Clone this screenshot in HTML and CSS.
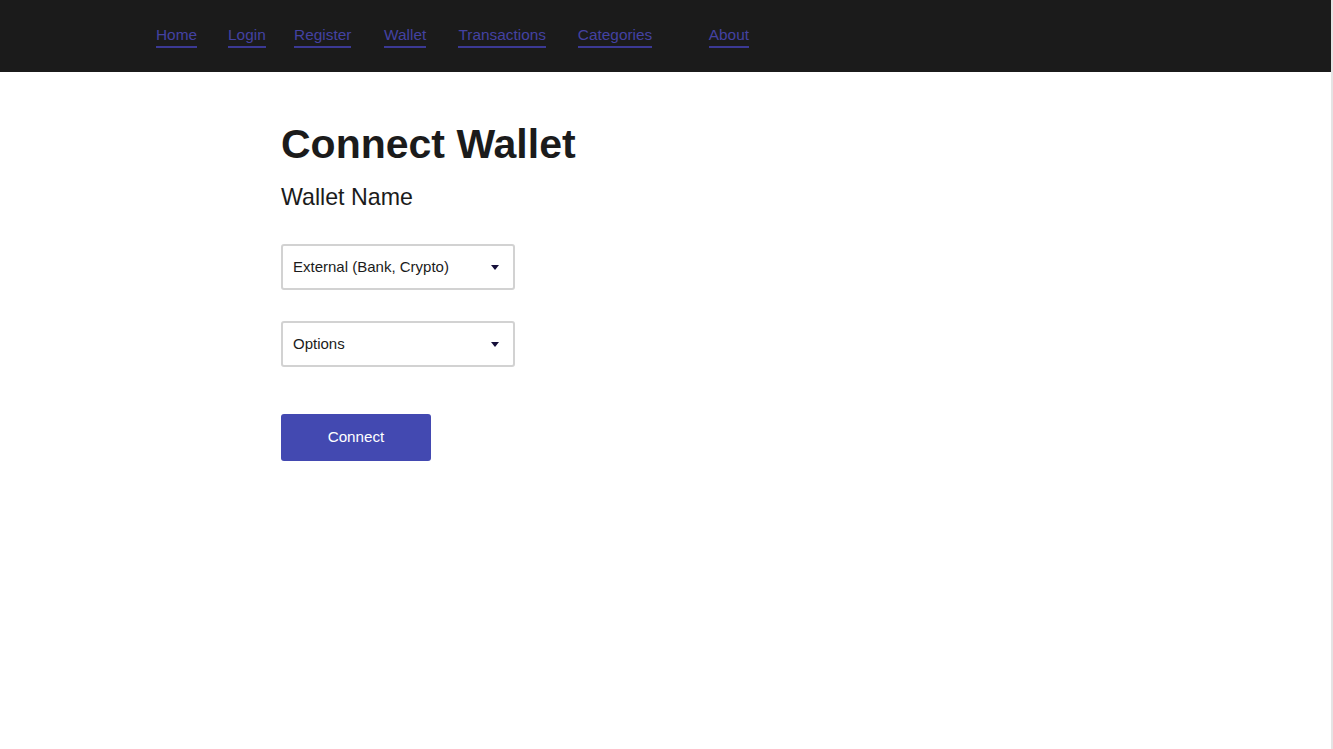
FILE: index.html
```html
<!DOCTYPE html>
<html lang="en">
<head>
<meta charset="utf-8">
<title>Connect Wallet</title>
<link rel="stylesheet" href="styles.css">
</head>
<body>
<header class="topbar">
  <nav class="nav">
    <a class="nav-link" href="#">Home</a>
    <a class="nav-link" href="#">Login</a>
    <a class="nav-link" href="#">Register</a>
    <a class="nav-link" href="#">Wallet</a>
    <a class="nav-link" href="#">Transactions</a>
    <a class="nav-link" href="#">Categories</a>
    <a class="nav-link nav-link-about" href="#">About</a>
  </nav>
</header>
<main class="content">
  <h1 class="title">Connect Wallet</h1>
  <h2 class="subtitle">Wallet Name</h2>
  <div class="select select-first">
    <span class="select-text">External (Bank, Crypto)</span>
    <span class="caret"></span>
  </div>
  <div class="select select-second">
    <span class="select-text">Options</span>
    <span class="caret"></span>
  </div>
  <button class="btn" type="button">Connect</button>
</main>
</body>
</html>
```
FILE: styles.css
```css
* { box-sizing: border-box; }
html, body { margin: 0; padding: 0; }
body {
  font-family: "Liberation Sans", Arial, sans-serif;
  background: #ffffff;
  color: #1b1b1b;
  min-height: 749px;
  border-right: 2px solid #e4e4e4;
}
.topbar {
  height: 72px;
  background: #1b1b1b;
  padding: 26px 0 0 156px;
}
.nav {
  display: flex;
  align-items: flex-start;
}
.nav-link {
  font-size: 15.4px;
  line-height: 17px;
  color: #4442a2;
  text-decoration: none;
  padding-bottom: 3px;
  border-bottom: 2px solid #3b3994;
}
.nav-link:nth-child(1) { margin-right: 31px; }
.nav-link:nth-child(2) { margin-right: 28.3px; }
.nav-link:nth-child(3) { margin-right: 32.7px; }
.nav-link:nth-child(4) { margin-right: 32.2px; }
.nav-link:nth-child(5) { margin-right: 31.9px; }
.nav-link:nth-child(6) { margin-right: 56.5px; }
.content {
  display: flex;
  flex-direction: column;
  align-items: flex-start;
  padding-left: 281px;
  padding-top: 49px;
}
.title {
  margin: 0;
  font-size: 41px;
  line-height: 47px;
  font-weight: 700;
  color: #1b1b1b;
}
.subtitle {
  margin: 16px 0 0 0;
  font-size: 23.2px;
  line-height: 27px;
  font-weight: 400;
  color: #1b1b1b;
}
.select {
  width: 234px;
  height: 46px;
  border: 2px solid #d2d2d2;
  border-radius: 3px;
  display: flex;
  align-items: center;
  justify-content: space-between;
  padding: 0 14px 0 10px;
  font-size: 15px;
  color: #1b1b1b;
}
.select-first { margin-top: 33px; }
.select-second { margin-top: 31px; }
.select-text { line-height: 17px; margin-top: -2px; }
.caret {
  width: 0;
  height: 0;
  border-left: 4.5px solid transparent;
  border-right: 4.5px solid transparent;
  border-top: 5px solid #150f3a;
  margin-top: 0;
}
.btn {
  margin-top: 47px;
  width: 150px;
  height: 47px;
  border: none;
  border-radius: 3px;
  background: #4349b1;
  color: #ffffff;
  font-family: "Liberation Sans", Arial, sans-serif;
  font-size: 15.2px;
  padding: 0 0 2px 0;
  cursor: pointer;
}
```
